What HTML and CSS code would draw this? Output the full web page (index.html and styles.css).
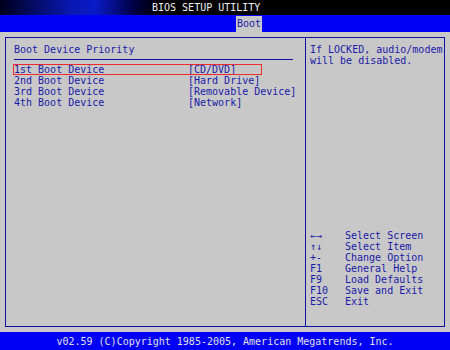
FILE: index.html
```html
<!DOCTYPE html>
<html>
<head>
    <meta charset="utf-8">
    <title>BIOS Setup Utility</title>
    <link rel="stylesheet" href="styles.css">
</head>
<body>
    <div class="screen">
        <div class="title-bar">BIOS SETUP UTILITY</div>

        <div class="tab-bar">
            <span class="tab active">Boot</span>
        </div>

        <div class="main">
            <div class="frame">
                <div class="left-panel">
                    <div class="section-title">Boot Device Priority</div>
                    <div class="rule"></div>
                    <div class="device-list">
                        <div class="device-row selected">
                            <span class="device-name">1st Boot Device</span>
                            <span class="device-value">[CD/DVD]</span>
                        </div>
                        <div class="device-row">
                            <span class="device-name">2nd Boot Device</span>
                            <span class="device-value">[Hard Drive]</span>
                        </div>
                        <div class="device-row">
                            <span class="device-name">3rd Boot Device</span>
                            <span class="device-value">[Removable Device]</span>
                        </div>
                        <div class="device-row">
                            <span class="device-name">4th Boot Device</span>
                            <span class="device-value">[Network]</span>
                        </div>
                    </div>
                </div>

                <div class="right-panel">
                    <div class="help-text">
                        If LOCKED, audio/modem<br>
                        will be disabled.
                    </div>
                    <div class="key-list">
                        <span class="key">←→</span><span>Select Screen</span>
                        <span class="key">↑↓</span><span>Select Item</span>
                        <span class="key">+-</span><span>Change Option</span>
                        <span class="key">F1</span><span>General Help</span>
                        <span class="key">F9</span><span>Load Defaults</span>
                        <span class="key">F10</span><span>Save and Exit</span>
                        <span class="key">ESC</span><span>Exit</span>
                    </div>
                </div>
            </div>
        </div>

        <div class="footer">v02.59 (C)Copyright 1985-2005, American Megatrends, Inc.</div>
    </div>
</body>
</html>
```

FILE: styles.css
```css
/* General page */
body {
    margin: 0;
    padding: 0;
    background-color: #c8c8c8;
    font-family: "DejaVu Sans Mono", "Liberation Mono", monospace;
    font-size: 10px;
    color: #1a1aa8;
}

.screen {
    width: 450px;
    height: 350px;
    display: flex;
    flex-direction: column;
}

/* Top title bar */
.title-bar {
    height: 15px;
    line-height: 15px;
    padding-left: 152px;
    color: #f0f0f0;
    background: linear-gradient(to right, #00001c 0, #0818b0 70px, #0a1ac8 95px, #000040 135px, #000 160px);
    white-space: nowrap;
}

/* Menu tabs */
.tab-bar {
    height: 17px;
    background-color: #0000f4;
    padding-left: 236px;
    display: flex;
    align-items: flex-end;
}

.tab {
    padding: 0 1px;
    height: 16px;
    line-height: 16px;
}

.tab.active {
    background-color: #c8c8c8;
    color: #1a1aa8;
}

/* Main area */
.main {
    flex: 1;
    padding: 5px 5px 5px 5px;
    display: flex;
}

.frame {
    flex: 1;
    display: flex;
    border: 1px solid #1010a0;
}

.left-panel {
    width: 300px;
    padding: 6px 12px 0 8px;
    border-right: 1px solid #1010a0;
    box-sizing: border-box;
}

.section-title {
    line-height: 11px;
}

.rule {
    height: 1px;
    background-color: #1010a0;
    margin-top: 4px;
}

.device-list {
    margin-top: 4px;
}

.device-row {
    display: flex;
    line-height: 11px;
    margin-left: -1px;
    padding-left: 1px;
    width: 248px;
    white-space: nowrap;
}

.device-row.selected {
    outline: 1px solid #ee2a2a;
    outline-offset: -1px;
}

.device-name {
    width: 174px;
    flex-shrink: 0;
}

/* Help panel */
.right-panel {
    flex: 1;
    padding: 6px 0 19px 4px;
    display: flex;
    flex-direction: column;
    justify-content: space-between;
}

.help-text {
    line-height: 11px;
}

.key-list {
    display: grid;
    grid-template-columns: 35px auto;
    line-height: 11px;
}

/* Bottom bar */
.footer {
    height: 18px;
    line-height: 19px;
    text-align: center;
    background-color: #0000f4;
    color: #e0e0e0;
    white-space: nowrap;
}
```
